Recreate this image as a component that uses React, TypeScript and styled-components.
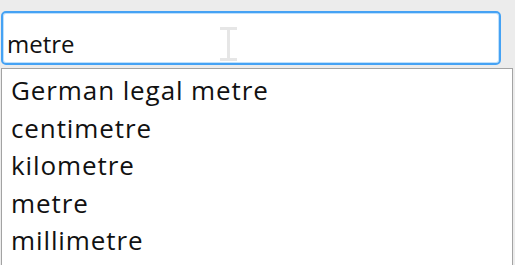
import React from "react";
import styled, { createGlobalStyle } from "styled-components";

const GlobalStyle = createGlobalStyle`
  body {
    margin: 0;
    background: #ececec;
    font-family: "Open Sans", "Noto Sans", sans-serif;
    overflow: hidden;
  }
`;

const Page = styled.div`
  display: flex;
  flex-direction: column;
  gap: 3px;
  padding: 11px 0 0 1px;
  height: 265px;
  box-sizing: border-box;
`;

const InputWrap = styled.div`
  position: relative;
  width: 500px;
  height: 54px;
  box-sizing: border-box;
  border: 2px solid #45a2f4;
  border-radius: 5px;
  background: #fff;
  box-shadow: inset 0 0 0 1px #bfe0fb;
`;

const Field = styled.input`
  width: 100%;
  height: 100%;
  box-sizing: border-box;
  border: none;
  outline: none;
  background: transparent;
  padding: 10px 0 0 4px;
  font-family: "Open Sans", "Noto Sans", sans-serif;
  font-size: 24px;
  color: #111;
`;

const Cursor = styled.svg`
  position: absolute;
  left: 216px;
  top: 14px;
  pointer-events: none;
`;

const List = styled.ul`
  flex: 1;
  width: 512px;
  margin: 0;
  padding: 3px 0 0 9px;
  list-style: none;
  box-sizing: border-box;
  background: #fff;
  border: 1px solid #a3a3a3;
  border-bottom: none;
`;

const Item = styled.li`
  font-size: 26px;
  letter-spacing: 0.9px;
  line-height: 37.5px;
  color: #111;
`;

const units = [
  "German legal metre",
  "centimetre",
  "kilometre",
  "metre",
  "millimetre",
];

export default function App() {
  return (
    <>
      <GlobalStyle />
      <Page>
        <InputWrap>
          <Field defaultValue="metre" />
          <Cursor width="20" height="34" viewBox="0 0 20 34">
            <path
              d="M1 1.5h17M1 32.5h17M9.5 1.5v31"
              stroke="#e6e6e6"
              strokeWidth="3"
              fill="none"
            />
          </Cursor>
        </InputWrap>
        <List>
          {units.map((unit) => (
            <Item key={unit}>{unit}</Item>
          ))}
        </List>
      </Page>
    </>
  );
}
